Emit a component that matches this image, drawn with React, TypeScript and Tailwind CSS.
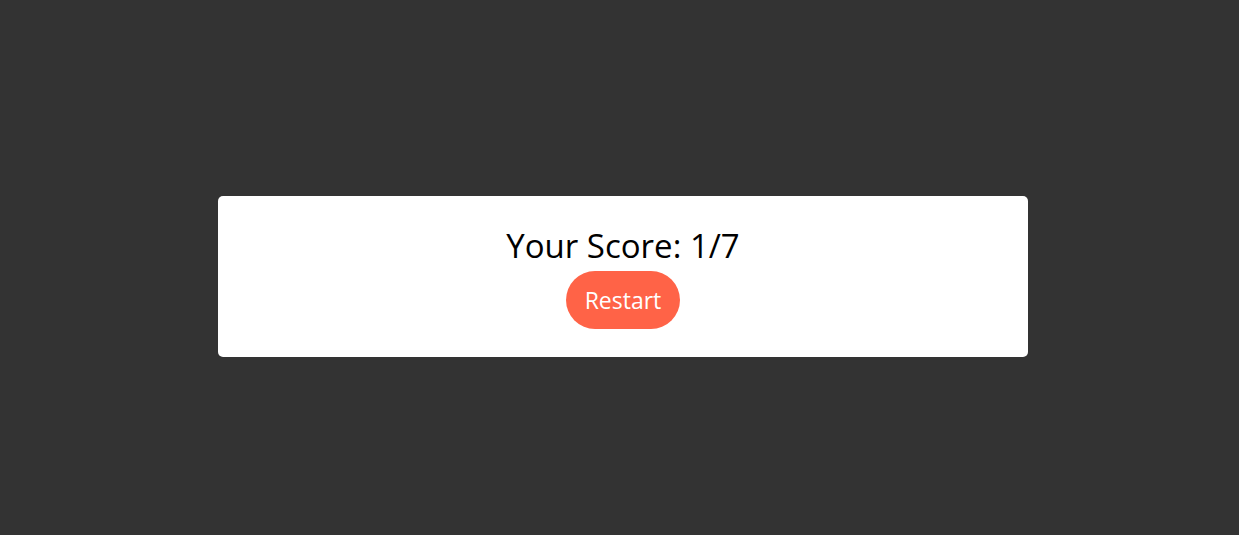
export default function App() {
  return (
    <main className="min-h-screen bg-[#333333] flex items-center justify-center pl-[7px] pt-[18px] font-['Open_Sans',sans-serif]">
      <section className="w-[810px] h-[161px] bg-white rounded-[5px] flex flex-col items-center pt-[28px]">
        <h2 className="text-[33px] leading-[44px] text-black">Your Score: 1/7</h2>
        <button className="mt-[3px] h-[58px] px-[19px] rounded-full bg-[#ff6347] text-white text-[23px] cursor-pointer">
          Restart
        </button>
      </section>
    </main>
  )
}
